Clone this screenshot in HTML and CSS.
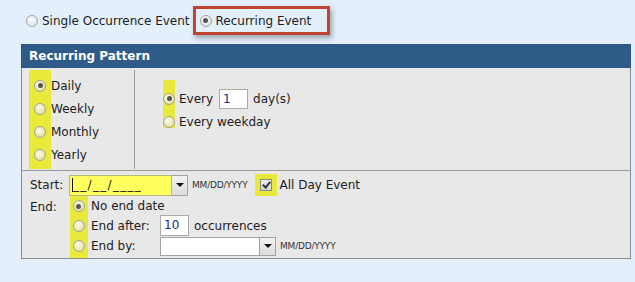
FILE: index.html
```html
<!DOCTYPE html>
<html lang="en">
<head>
    <meta charset="UTF-8">
    <title>Recurring Event</title>
    <link rel="stylesheet" href="styles.css">
</head>
<body>
    <div class="event-type">
        <label class="choice"><span class="radio"></span>Single Occurrence Event</label>
        <label class="choice marked"><span class="radio on"></span>Recurring Event</label>
    </div>

    <div class="panel">
        <div class="panel-head">Recurring Pattern</div>
        <div class="panel-body">
            <div class="pattern">
                <div class="freq">
                    <div class="opt"><span class="mark"><span class="radio on"></span></span>Daily</div>
                    <div class="opt"><span class="mark"><span class="radio"></span></span>Weekly</div>
                    <div class="opt"><span class="mark"><span class="radio"></span></span>Monthly</div>
                    <div class="opt"><span class="mark"><span class="radio"></span></span>Yearly</div>
                </div>
                <div class="daily">
                    <div class="daily-opts">
                        <div class="opt"><span class="mark"><span class="radio on"></span></span>Every <span class="box num">1</span> day(s)</div>
                        <div class="opt"><span class="mark"><span class="radio"></span></span>Every weekday</div>
                    </div>
                </div>
            </div>

            <div class="range">
                <div class="row start-row">
                    <span class="lbl">Start:</span>
                    <span class="date-input yellow"><span class="mask">__/__/____</span></span><span class="drop"></span>
                    <span class="hint">MM/DD/YYYY</span>
                    <span class="check-hl"><span class="check"></span></span>
                    <span>All Day Event</span>
                </div>
                <div class="row end-row">
                    <span class="lbl end-lbl">End:</span>
                    <div class="end-opts">
                        <div class="opt r1"><span class="mark"><span class="radio on"></span></span>No end date</div>
                        <div class="opt r2"><span class="mark"><span class="radio"></span></span><span class="sub">End after:</span><span class="box count">10</span> occurrences</div>
                        <div class="opt r3"><span class="mark"><span class="radio"></span></span><span class="sub">End by:</span><span class="date-input plain"></span><span class="drop"></span><span class="hint">MM/DD/YYYY</span></div>
                    </div>
                </div>
            </div>
        </div>
    </div>
</body>
</html>
```

FILE: styles.css
```css
body {
    margin: 0;
    padding-top: 6px;
    background-color: #e3f0fc;
    font-family: "DejaVu Sans", Verdana, sans-serif;
    font-size: 12px;
    color: #1c1c1c;
}
.event-type {
    display: flex;
    align-items: center;
    height: 29px;
    padding-left: 26px;
}
.choice {
    display: flex;
    align-items: center;
    gap: 4px;
}
.choice.marked {
    box-sizing: border-box;
    height: 29px;
    width: 137px;
    margin-left: 3px;
    padding-left: 4px;
    border: 3px solid #bf4431;
    box-shadow: 2px 3px 5px rgba(60, 70, 80, 0.45);
}
.radio {
    box-sizing: border-box;
    display: inline-flex;
    align-items: center;
    justify-content: center;
    width: 12px;
    height: 12px;
    border: 1px solid #a3a3a3;
    border-radius: 50%;
    background: radial-gradient(circle at 40% 35%, rgba(255, 255, 255, 0.9), rgba(200, 200, 200, 0.5));
}
.radio.on::after {
    content: "";
    width: 5px;
    height: 5px;
    border-radius: 50%;
    background-color: #555;
}
.panel {
    margin: 9px 0 0 21px;
    width: 610px;
}
.panel-head {
    box-sizing: border-box;
    height: 24px;
    padding-left: 7px;
    background-color: #2e5b88;
    border: 1px solid #2a5584;
    color: white;
    font-weight: bold;
    font-size: 12px;
    line-height: 22px;
}
.panel-body {
    background-color: #e8e8e8;
    border: 1px solid #8c8c8c;
    border-top: none;
    height: 190px;
}
.pattern {
    display: flex;
    height: 102px;
    border-bottom: 1px solid #9a9a9a;
}
.freq {
    width: 105px;
    margin: 2px 0 0 7px;
    padding: 4px 0 3px;
    align-self: flex-start;
    border-right: 1px solid #9a9a9a;
    background: linear-gradient(#e9e93c, #e9e93c) no-repeat 0 0 / 22px 100%;
}
.opt {
    display: flex;
    align-items: center;
    height: 23px;
    white-space: nowrap;
}
.freq .mark {
    width: 22px;
    display: flex;
    justify-content: center;
}
.daily {
    padding: 12px 0 0 28px;
}
.daily-opts {
    padding: 7px 0 0;
    background: linear-gradient(#e9e93c, #e9e93c) no-repeat 0 0 / 12px 48px;
}
.daily-opts .mark,
.end-opts .mark {
    display: flex;
    justify-content: center;
    margin-right: 4px;
}
.daily-opts .opt {
    height: 23px;
}
.box {
    box-sizing: border-box;
    display: inline-block;
    height: 20px;
    background-color: white;
    border: 1px solid #a9a9a9;
    color: #1a2a8a;
    line-height: 18px;
    padding-left: 3px;
}
.num {
    width: 29px;
    margin: 0 5px 0 6px;
}
.range {
    padding: 3px 0 0 8px;
}
.row {
    display: flex;
    align-items: flex-start;
}
.start-row {
    align-items: center;
    height: 22px;
}
.lbl {
    width: 39px;
}
.end-lbl {
    margin-top: 4px;
}
.date-input {
    box-sizing: border-box;
    height: 21px;
    border: 1px solid #a3a3a3;
}
.date-input.yellow {
    width: 103px;
    background-color: #ffff60;
    border-color: #b9b97a;
    padding-left: 2px;
    line-height: 19px;
}
.mask {
    border-left: 1px solid #111;
    letter-spacing: 1.3px;
}
.date-input.plain {
    width: 100px;
    height: 19px;
    background-color: white;
}
.drop {
    box-sizing: border-box;
    position: relative;
    width: 16px;
    height: 21px;
    border: 1px solid #a3a3a3;
    border-left: none;
    background: linear-gradient(#f2f2f2, #dcdcdc);
}
.r3 .drop {
    height: 19px;
}
.drop::after {
    content: "";
    position: absolute;
    left: 4px;
    top: 50%;
    margin-top: -2px;
    border-left: 4px solid transparent;
    border-right: 4px solid transparent;
    border-top: 4px solid #111;
}
.hint {
    font-size: 9px;
    color: #333;
    margin-left: 4px;
    letter-spacing: -0.2px;
}
.check-hl {
    display: flex;
    align-items: center;
    justify-content: center;
    width: 22px;
    height: 22px;
    margin: 0 2px 0 8px;
    background-color: #e9e93c;
}
.check {
    box-sizing: border-box;
    position: relative;
    width: 12px;
    height: 12px;
    border: 1px solid #8a8a8a;
    background: linear-gradient(#f0f0f0, #d4d4d4);
}
.check::after {
    content: "";
    position: absolute;
    left: 3px;
    top: 0;
    width: 3px;
    height: 6px;
    border-right: 2px solid #333;
    border-bottom: 2px solid #333;
    transform: rotate(40deg);
}
.end-opts {
    padding: 1px 0 2px;
    background: linear-gradient(#e9e93c, #e9e93c) no-repeat 1px 0 / 18px 100%;
}
.end-opts .mark {
    width: 19px;
    margin-right: 3px;
}
.end-opts .r1 {
    height: 18px;
}
.end-opts .r2 {
    height: 21px;
}
.end-opts .r3 {
    height: 20px;
}
.sub {
    width: 69px;
}
.count {
    width: 29px;
    height: 21px;
    line-height: 19px;
    margin-right: 5px;
}
```
